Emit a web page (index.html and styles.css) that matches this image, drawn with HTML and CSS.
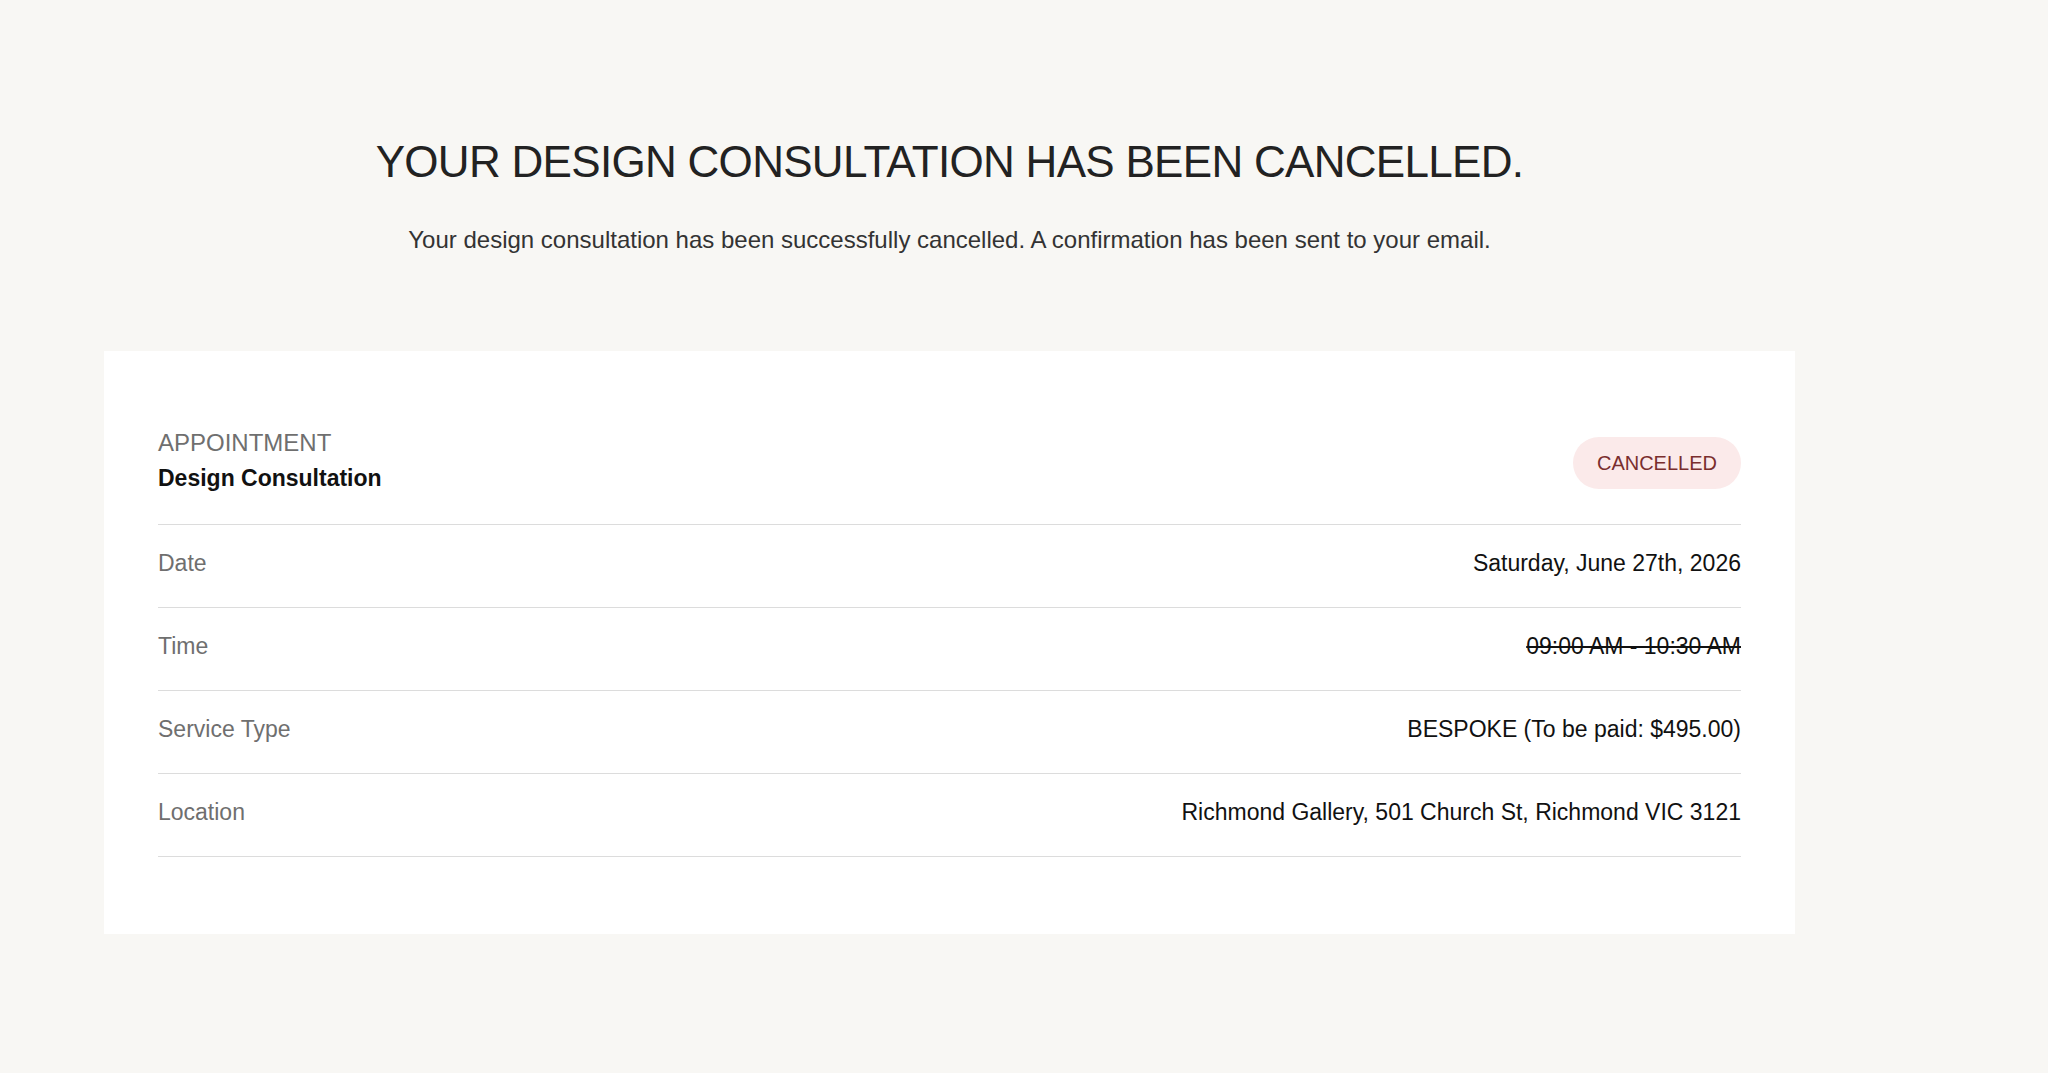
FILE: index.html
```html
<!DOCTYPE html>
<html lang="en">
<head>
    <meta charset="UTF-8">
    <meta name="viewport" content="width=device-width, initial-scale=1.0">
    <title>Consultation Cancelled</title>
    <link rel="stylesheet" href="styles.css">
</head>
<body>
    <main class="page">
        <header class="intro">
            <h1>YOUR DESIGN CONSULTATION HAS BEEN CANCELLED.</h1>
            <p>Your design consultation has been successfully cancelled. A confirmation has been sent to your email.</p>
        </header>

        <section class="booking-card">
            <div class="booking-head">
                <div>
                    <span class="eyebrow">APPOINTMENT</span>
                    <strong class="booking-title">Design Consultation</strong>
                </div>
                <span class="status-badge">CANCELLED</span>
            </div>

            <div class="detail-row">
                <span class="detail-label">Date</span>
                <span class="detail-value">Saturday, June 27th, 2026</span>
            </div>
            <div class="detail-row">
                <span class="detail-label">Time</span>
                <span class="detail-value struck">09:00 AM - 10:30 AM</span>
            </div>
            <div class="detail-row">
                <span class="detail-label">Service Type</span>
                <span class="detail-value">BESPOKE (To be paid: $495.00)</span>
            </div>
            <div class="detail-row">
                <span class="detail-label">Location</span>
                <span class="detail-value">Richmond Gallery, 501 Church St, Richmond VIC 3121</span>
            </div>
        </section>
    </main>
</body>
</html>
```

FILE: styles.css
```css
body {
    margin: 0;
    background-color: #f8f7f4;
    color: #111;
    font-family: 'Liberation Sans', Arial, Helvetica, sans-serif;
    min-height: 100vh;
}
.page {
    width: 1691px;
    margin-left: 104px;
    padding-top: 135px;
    padding-bottom: 139px;
}
.intro {
    text-align: center;
    margin-bottom: 95px;
}
.intro h1 {
    margin: 0 0 36px;
    font-size: 44px;
    line-height: 53px;
    font-weight: 400;
    letter-spacing: -0.7px;
    color: #222;
}
.intro p {
    margin: 0;
    font-size: 24px;
    line-height: 32px;
    color: #333;
}
.booking-card {
    background-color: #fff;
    padding: 76px 54px 77px;
}
.booking-head {
    display: flex;
    justify-content: space-between;
    align-items: center;
    padding-bottom: 30px;
    border-bottom: 1px solid #dcdcdc;
}
.eyebrow {
    display: block;
    font-size: 24px;
    line-height: 32px;
    color: #6f6f6f;
    margin-bottom: 3px;
}
.booking-title {
    display: block;
    font-size: 23px;
    line-height: 32px;
    font-weight: 700;
    color: #111;
}
.status-badge {
    background-color: #fbeaea;
    color: #7a2e2e;
    font-size: 20px;
    line-height: 24px;
    padding: 14px 24px;
    border-radius: 26px;
    margin-top: 4px;
}
.detail-row {
    display: flex;
    justify-content: space-between;
    padding: 22px 0 28px;
    border-bottom: 1px solid #dcdcdc;
    font-size: 23px;
    line-height: 32px;
}
.detail-label {
    color: #6f6f6f;
}
.detail-value {
    color: #111;
    text-align: right;
}
.struck {
    text-decoration: line-through;
}
```
